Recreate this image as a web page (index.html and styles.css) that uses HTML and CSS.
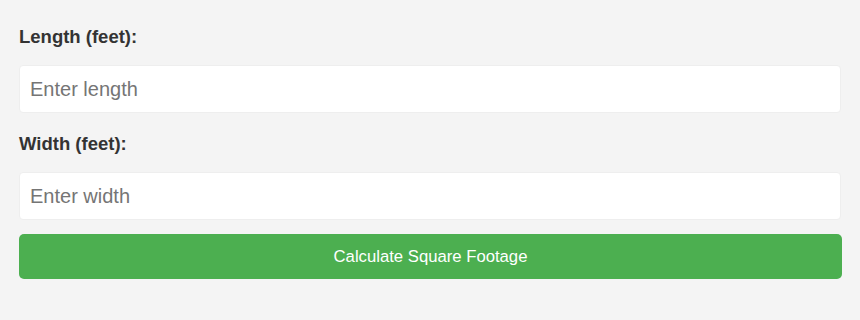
FILE: index.html
```html
<!DOCTYPE html>
<html lang="en">
<head>
  <meta charset="UTF-8" />
  <meta name="viewport" content="width=device-width, initial-scale=1.0" />
  <title>Square Footage Calculator</title>
  <link rel="stylesheet" href="styles.css">
</head>
<body>
  <div class="calculator">
    <label for="length">Length (feet):</label>
    <input type="number" id="length" placeholder="Enter length">

    <label for="width">Width (feet):</label>
    <input type="number" id="width" placeholder="Enter width">

    <button type="button">Calculate Square Footage</button>
  </div>
</body>
</html>
```

FILE: styles.css
```css
body, html {
  margin: 0;
  padding: 0;
  background: #f4f4f4;
  font-family: "Liberation Sans", Arial, sans-serif;
}
.calculator {
  display: flex;
  flex-direction: column;
  padding: 26px 18px 0 19px;
}
label {
  font-size: 18.5px;
  line-height: 21px;
  font-weight: bold;
  color: #333;
  margin-bottom: 18px;
}
input {
  box-sizing: border-box;
  height: 48px;
  margin: 0 1px 20px 0;
  padding: 0 10px;
  border: 1px solid #eee;
  border-radius: 4px;
  background: #fff;
  font-family: inherit;
  font-size: 20px;
  color: #333;
}
input::placeholder {
  color: #757575;
}
input:last-of-type {
  margin-bottom: 14px;
}
button {
  height: 45px;
  background: #4caf50;
  color: white;
  border: none;
  border-radius: 5px;
  font-family: inherit;
  font-size: 16.7px;
  cursor: pointer;
}
```
